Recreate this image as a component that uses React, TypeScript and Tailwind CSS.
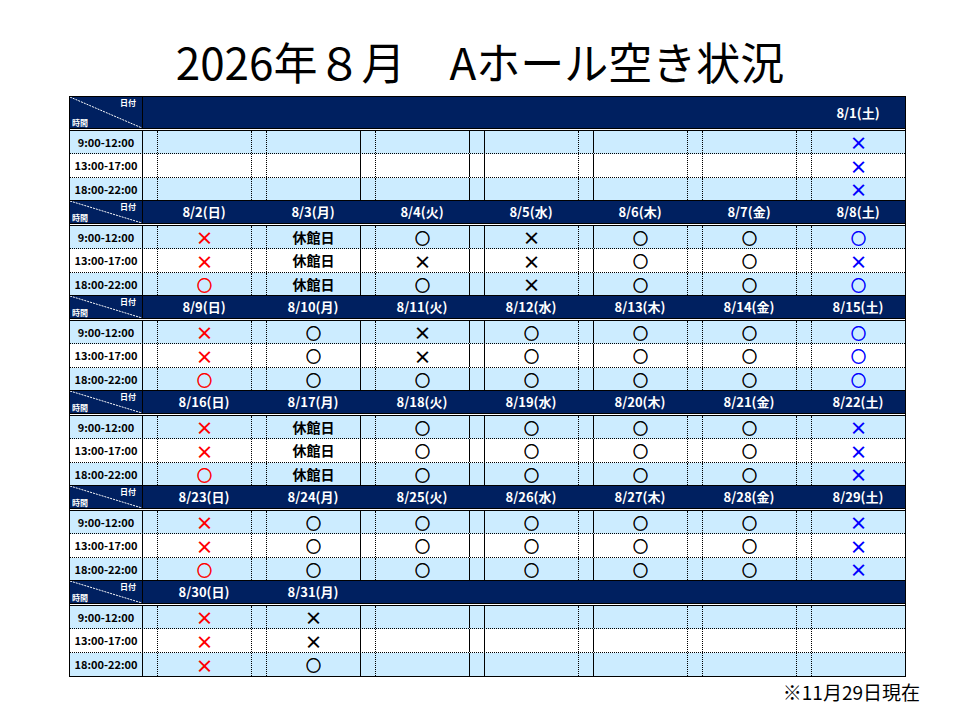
import React from "react";

type Mark = "o" | "x" | "休" | "";

const FONT = { fontFamily: '"Noto Sans CJK JP", "Noto Sans", sans-serif' };

const times = ["9:00-12:00", "13:00-17:00", "18:00-22:00"];

// each week: 7 day labels (Sun..Sat) and 3 rows x 7 cells
const weeks: { days: string[]; rows: Mark[][] }[] = [
  {
    days: ["", "", "", "", "", "", "8/1(土)"],
    rows: [
      ["", "", "", "", "", "", "x"],
      ["", "", "", "", "", "", "x"],
      ["", "", "", "", "", "", "x"],
    ],
  },
  {
    days: ["8/2(日)", "8/3(月)", "8/4(火)", "8/5(水)", "8/6(木)", "8/7(金)", "8/8(土)"],
    rows: [
      ["x", "休", "o", "x", "o", "o", "o"],
      ["x", "休", "x", "x", "o", "o", "x"],
      ["o", "休", "o", "x", "o", "o", "o"],
    ],
  },
  {
    days: ["8/9(日)", "8/10(月)", "8/11(火)", "8/12(水)", "8/13(木)", "8/14(金)", "8/15(土)"],
    rows: [
      ["x", "o", "x", "o", "o", "o", "o"],
      ["x", "o", "x", "o", "o", "o", "o"],
      ["o", "o", "o", "o", "o", "o", "o"],
    ],
  },
  {
    days: ["8/16(日)", "8/17(月)", "8/18(火)", "8/19(水)", "8/20(木)", "8/21(金)", "8/22(土)"],
    rows: [
      ["x", "休", "o", "o", "o", "o", "x"],
      ["x", "休", "o", "o", "o", "o", "x"],
      ["o", "休", "o", "o", "o", "o", "x"],
    ],
  },
  {
    days: ["8/23(日)", "8/24(月)", "8/25(火)", "8/26(水)", "8/27(木)", "8/28(金)", "8/29(土)"],
    rows: [
      ["x", "o", "o", "o", "o", "o", "x"],
      ["x", "o", "o", "o", "o", "o", "x"],
      ["o", "o", "o", "o", "o", "o", "x"],
    ],
  },
  {
    days: ["8/30(日)", "8/31(月)", "", "", "", "", ""],
    rows: [
      ["x", "x", "", "", "", "", ""],
      ["x", "x", "", "", "", "", ""],
      ["x", "o", "", "", "", "", ""],
    ],
  },
];

const narrowSolid = [0, 2, 3];
const wideSolid = [3, 4];

const rowStyles = [
  "h-[23px] bg-[#ccecff] border-b border-dotted border-black",
  "h-[24px] bg-white border-b border-dotted border-black",
  "h-[22px] bg-[#ccecff]",
];

const lastRowStyles = [
  "h-[23px] bg-[#ccecff] border-b border-dotted border-black",
  "h-[24px] bg-white border-b border-dotted border-black",
  "h-[23px] bg-[#ccecff]",
];

function Corner({ tall }: { tall: boolean }) {
  const h = tall ? 31 : 22;
  return (
    <div className="relative w-[72px] shrink-0 h-full">
      <svg className="absolute inset-0" width={72} height={h}>
        <line x1={0} y1={0} x2={72} y2={h} stroke="white" strokeWidth={1} strokeDasharray="2 1" />
      </svg>
      <span className="absolute top-px right-[6px] text-[8px] leading-[10px] font-bold text-white">
        日付
      </span>
      <span className="absolute bottom-0 left-[2px] text-[8px] leading-[10px] font-bold text-white">
        時間
      </span>
    </div>
  );
}

function Symbol({ mark, col }: { mark: Mark; col: number }) {
  if (mark === "") return null;
  if (mark === "休") {
    return <span className="text-[14px] font-bold text-black">休館日</span>;
  }
  const color = col === 0 ? "text-[#ff0000]" : col === 6 ? "text-[#0000ff]" : "text-black";
  return mark === "o" ? (
    <span className={`text-[15px] font-bold leading-none [-webkit-text-stroke:0.6px_currentColor] ${color}`}>○</span>
  ) : (
    <span className={`text-[18px] font-bold leading-none ${color}`}>×</span>
  );
}

function Week({ week, first, last }: { week: (typeof weeks)[number]; first: boolean; last: boolean }) {
  const styles = last ? lastRowStyles : rowStyles;
  return (
    <div>
      {/* header */}
      <div
        className={
          first
            ? "flex h-[31px] bg-[#002060]"
            : "flex h-[23px] bg-[#002060] border-t border-black"
        }
      >
        <Corner tall={first} />
        {week.days.map((d, k) => (
          <React.Fragment key={k}>
            <div className={k === 0 ? "w-[15px] shrink-0 border-l border-black" : "w-[15px] shrink-0"} />
            <div className="w-[94px] shrink-0 flex items-center justify-center text-[13px] font-bold text-white">
              {d}
            </div>
          </React.Fragment>
        ))}
      </div>
      <div className="h-px bg-black" />
      <div className="h-px bg-white" />
      <div className="h-px bg-black" />

      {week.rows.map((row, r) => (
        <div key={r} className={`flex ${styles[r]}`}>
          <div className="w-[72px] shrink-0 flex items-center justify-center text-[11px] font-bold text-black">
            {times[r]}
          </div>
          {row.map((m, k) => (
            <React.Fragment key={k}>
              <div
                className={
                  narrowSolid.includes(k)
                    ? "w-[15px] shrink-0 border-l border-solid border-black"
                    : "w-[15px] shrink-0 border-l border-dotted border-black"
                }
              />
              <div
                className={
                  wideSolid.includes(k)
                    ? "w-[94px] shrink-0 flex items-center justify-center border-l border-solid border-black"
                    : "w-[94px] shrink-0 flex items-center justify-center border-l border-dotted border-black"
                }
              >
                <Symbol mark={m} col={k} />
              </div>
            </React.Fragment>
          ))}
        </div>
      ))}
    </div>
  );
}

export default function App() {
  return (
    <div className="w-[960px] h-[720px] bg-white" style={FONT}>
      <div className="h-[96px] pt-[35px] text-center text-[44px] leading-[52px] text-black">
        2026年８月　Aホール空き状況
      </div>

      <div className="ml-[69px] w-[837px] border border-black">
        {weeks.map((w, i) => (
          <Week key={i} week={w} first={i === 0} last={i === weeks.length - 1} />
        ))}
      </div>

      <div className="pr-[40px] mt-[3px] text-right text-[19px] leading-[24px] text-black">
        ※11月29日現在
      </div>
    </div>
  );
}
